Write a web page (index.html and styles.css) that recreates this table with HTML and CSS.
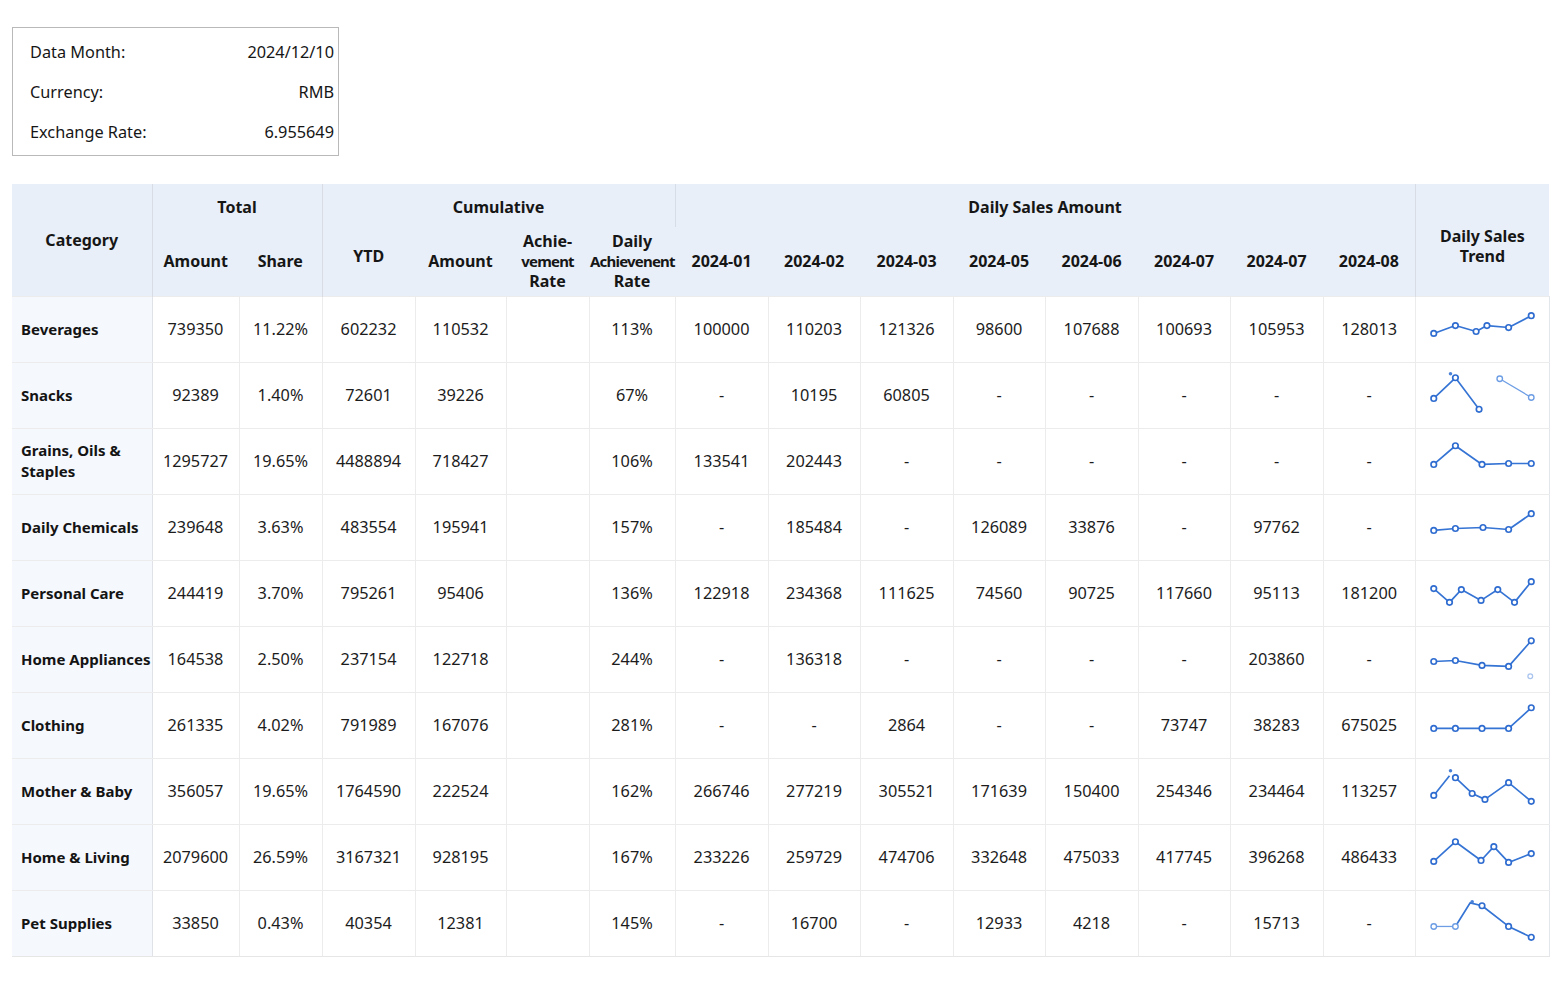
FILE: index.html
```html
<!DOCTYPE html>
<html lang="en">
<head>
<meta charset="utf-8">
<title>Daily Sales Report</title>
<link rel="stylesheet" href="styles.css">
</head>
<body>
<div class="page">
  <div class="info">
    <div class="info-row"><span>Data Month:</span><span>2024/12/10</span></div>
    <div class="info-row"><span>Currency:</span><span>RMB</span></div>
    <div class="info-row"><span>Exchange Rate:</span><span>6.955649</span></div>
  </div>

  <table class="report">
    <colgroup>
      <col class="c-cat"><col class="c-87"><col class="c-83"><col class="c-93"><col class="c-91"><col class="c-83"><col class="c-86">
      <col class="c-93"><col class="c-92"><col class="c-93"><col class="c-92"><col class="c-93"><col class="c-92"><col class="c-93"><col class="c-92">
      <col class="c-trend">
    </colgroup>
    <thead>
      <tr class="h1">
        <th rowspan="2" class="grp-end cat-h">Category</th>
        <th colspan="2" class="grp-end">Total</th>
        <th colspan="4" class="grp-mid">Cumulative</th>
        <th colspan="8" class="grp-end">Daily Sales Amount</th>
        <th rowspan="2" class="trend-h">Daily Sales<br>Trend</th>
      </tr>
      <tr class="h2">
        <th>Amount</th>
        <th class="grp-end">Share</th>
        <th class="ytd">YTD</th>
        <th>Amount</th>
        <th>Achie-<br><span class="squeeze">vement</span><br>Rate</th>
        <th class="wide">Daily<br><span class="squeeze">Achievenent</span><br>Rate</th>
        <th>2024-01</th>
        <th>2024-02</th>
        <th>2024-03</th>
        <th>2024-05</th>
        <th>2024-06</th>
        <th>2024-07</th>
        <th>2024-07</th>
        <th class="grp-end">2024-08</th>
      </tr>
    </thead>
    <tbody>
      <tr>
        <td class="cat">Beverages</td><td>739350</td><td>11.22%</td><td>602232</td><td>110532</td><td></td><td>113%</td>
        <td>100000</td><td>110203</td><td>121326</td><td>98600</td><td>107688</td><td>100693</td><td>105953</td><td>128013</td>
        <td class="spark"><svg viewBox="0 0 134 66" width="134" height="65"><polyline points="17,37 39,29 60,35 71,29 93,31 116,19"/><circle cx="17" cy="37" r="2.8"/><circle cx="39" cy="29" r="2.8"/><circle cx="60" cy="35" r="2.8"/><circle cx="71" cy="29" r="2.8"/><circle cx="93" cy="31" r="2.8"/><circle cx="116" cy="19" r="2.8"/></svg></td>
      </tr>
      <tr>
        <td class="cat">Snacks</td><td>92389</td><td>1.40%</td><td>72601</td><td>39226</td><td></td><td>67%</td>
        <td>-</td><td>10195</td><td>60805</td><td>-</td><td>-</td><td>-</td><td>-</td><td>-</td>
        <td class="spark"><svg viewBox="0 0 134 66" width="134" height="65"><polyline points="17,36 39,15 63,47"/><polyline class="light" points="84,16 116,35"/><circle class="dot" cx="34" cy="11" r="1.8"/><circle cx="17" cy="36" r="2.8"/><circle cx="39" cy="15" r="2.8"/><circle cx="63" cy="47" r="2.8"/><circle class="light" cx="84" cy="16" r="2.8"/><circle class="light" cx="116" cy="35" r="2.8"/></svg></td>
      </tr>
      <tr>
        <td class="cat">Grains, Oils &amp;<br>Staples</td><td>1295727</td><td>19.65%</td><td>4488894</td><td>718427</td><td></td><td>106%</td>
        <td>133541</td><td>202443</td><td>-</td><td>-</td><td>-</td><td>-</td><td>-</td><td>-</td>
        <td class="spark"><svg viewBox="0 0 134 66" width="134" height="65"><polyline points="17,36 39,17 66,36 93,35 116,35"/><circle cx="17" cy="36" r="2.8"/><circle cx="39" cy="17" r="2.8"/><circle cx="66" cy="36" r="2.8"/><circle cx="93" cy="35" r="2.8"/><circle cx="116" cy="35" r="2.8"/></svg></td>
      </tr>
      <tr>
        <td class="cat">Daily Chemicals</td><td>239648</td><td>3.63%</td><td>483554</td><td>195941</td><td></td><td>157%</td>
        <td>-</td><td>185484</td><td>-</td><td>126089</td><td>33876</td><td>-</td><td>97762</td><td>-</td>
        <td class="spark"><svg viewBox="0 0 134 66" width="134" height="65"><polyline points="17,36 39,34 67,33 93,35 116,19"/><circle cx="17" cy="36" r="2.8"/><circle cx="39" cy="34" r="2.8"/><circle cx="67" cy="33" r="2.8"/><circle cx="93" cy="35" r="2.8"/><circle cx="116" cy="19" r="2.8"/></svg></td>
      </tr>
      <tr>
        <td class="cat">Personal Care</td><td>244419</td><td>3.70%</td><td>795261</td><td>95406</td><td></td><td>136%</td>
        <td>122918</td><td>234368</td><td>111625</td><td>74560</td><td>90725</td><td>117660</td><td>95113</td><td>181200</td>
        <td class="spark"><svg viewBox="0 0 134 66" width="134" height="65"><polyline points="17,28 33,42 45,29 65,40 82,29 99,42 116,21"/><circle cx="17" cy="28" r="2.8"/><circle cx="33" cy="42" r="2.8"/><circle cx="45" cy="29" r="2.8"/><circle cx="65" cy="40" r="2.8"/><circle cx="82" cy="29" r="2.8"/><circle cx="99" cy="42" r="2.8"/><circle cx="116" cy="21" r="2.8"/></svg></td>
      </tr>
      <tr>
        <td class="cat">Home Appliances</td><td>164538</td><td>2.50%</td><td>237154</td><td>122718</td><td></td><td>244%</td>
        <td>-</td><td>136318</td><td>-</td><td>-</td><td>-</td><td>-</td><td>203860</td><td>-</td>
        <td class="spark"><svg viewBox="0 0 134 66" width="134" height="65"><polyline points="17,35 39,34 66,39 93,40 116,14"/><circle cx="17" cy="35" r="2.8"/><circle cx="39" cy="34" r="2.8"/><circle cx="66" cy="39" r="2.8"/><circle cx="93" cy="40" r="2.8"/><circle cx="116" cy="14" r="2.8"/><circle class="faint" cx="115" cy="50" r="2.4"/></svg></td>
      </tr>
      <tr>
        <td class="cat">Clothing</td><td>261335</td><td>4.02%</td><td>791989</td><td>167076</td><td></td><td>281%</td>
        <td>-</td><td>-</td><td>2864</td><td>-</td><td>-</td><td>73747</td><td>38283</td><td>675025</td>
        <td class="spark"><svg viewBox="0 0 134 66" width="134" height="65"><polyline points="17,36 39,36 66,36 93,36 116,15"/><circle cx="17" cy="36" r="2.8"/><circle cx="39" cy="36" r="2.8"/><circle cx="66" cy="36" r="2.8"/><circle cx="93" cy="36" r="2.8"/><circle cx="116" cy="15" r="2.8"/></svg></td>
      </tr>
      <tr>
        <td class="cat">Mother &amp; Baby</td><td>356057</td><td>19.65%</td><td>1764590</td><td>222524</td><td></td><td>162%</td>
        <td>266746</td><td>277219</td><td>305521</td><td>171639</td><td>150400</td><td>254346</td><td>234464</td><td>113257</td>
        <td class="spark"><svg viewBox="0 0 134 66" width="134" height="65"><polyline points="17,37 33,17"/><polyline points="39,19 56,35 69,41 93,24 116,43"/><circle class="dot" cx="34" cy="12" r="1.8"/><circle cx="17" cy="37" r="2.8"/><circle cx="39" cy="19" r="2.8"/><circle cx="56" cy="35" r="2.8"/><circle cx="69" cy="41" r="2.8"/><circle cx="93" cy="24" r="2.8"/><circle cx="116" cy="43" r="2.8"/></svg></td>
      </tr>
      <tr>
        <td class="cat">Home &amp; Living</td><td>2079600</td><td>26.59%</td><td>3167321</td><td>928195</td><td></td><td>167%</td>
        <td>233226</td><td>259729</td><td>474706</td><td>332648</td><td>475033</td><td>417745</td><td>396268</td><td>486433</td>
        <td class="spark"><svg viewBox="0 0 134 66" width="134" height="65"><polyline points="17,37 39,17 65,36 78,22 93,38 116,29"/><circle cx="17" cy="37" r="2.8"/><circle cx="39" cy="17" r="2.8"/><circle cx="65" cy="36" r="2.8"/><circle cx="78" cy="22" r="2.8"/><circle cx="93" cy="38" r="2.8"/><circle cx="116" cy="29" r="2.8"/></svg></td>
      </tr>
      <tr>
        <td class="cat">Pet Supplies</td><td>33850</td><td>0.43%</td><td>40354</td><td>12381</td><td></td><td>145%</td>
        <td>-</td><td>16700</td><td>-</td><td>12933</td><td>4218</td><td>-</td><td>15713</td><td>-</td>
        <td class="spark"><svg viewBox="0 0 134 66" width="134" height="65"><polyline class="light" points="17,36 39,36"/><polyline points="39,36 54,12 66,15 93,36 116,47"/><circle class="dot" cx="56" cy="11" r="1.8"/><circle class="light" cx="17" cy="36" r="2.8"/><circle class="light" cx="39" cy="36" r="2.8"/><circle cx="66" cy="15" r="2.8"/><circle cx="93" cy="36" r="2.8"/><circle cx="116" cy="47" r="2.8"/></svg></td>
      </tr>
    </tbody>
  </table>
</div>
</body>
</html>
```
FILE: styles.css
```css
* { box-sizing: border-box; }

html, body {
  margin: 0;
  padding: 0;
  background: #ffffff;
}

body {
  font-family: "Noto Sans", "Open Sans", "Liberation Sans", sans-serif;
  color: #1c1c1c;
  font-size: 16px;
}

.page {
  padding: 27px 11px 0 12px;
}

/* info box */
.info {
  width: 327px;
  border: 1px solid #b9b9b9;
  padding: 4px 4px 3px 17px;
}

.info-row {
  display: flex;
  justify-content: space-between;
  align-items: center;
  height: 40px;
  font-size: 16.3px;
  color: #161616;
}

/* table */
.report {
  margin-top: 28px;
  width: 1537px;
  table-layout: fixed;
  border-collapse: collapse;
}

.c-cat { width: 140px; }
.c-87 { width: 87px; }
.c-83 { width: 83px; }
.c-93 { width: 93px; }
.c-92 { width: 92px; }
.c-91 { width: 91px; }
.c-86 { width: 86px; }
.c-trend { width: 134px; }

.report th {
  background: #e9eff9;
  font-weight: 700;
  font-size: 16px;
  line-height: 20px;
  color: #161616;
  text-align: center;
  vertical-align: middle;
  padding: 0 1px;
  border: none;
}

.report .h1 th { height: 43px; padding-top: 2px; }
.report .h2 th { height: 69px; padding-top: 0; }

.report th.cat-h { padding-top: 0; }
.report th.trend-h { padding-top: 12px; }

.report th.grp-end { border-right: 1px solid #d8dde5; }
.report th.grp-mid { border-right: 1px solid #d8dde5; }
.report .h2 th.ytd { padding-bottom: 10px; }

.report th.wide { white-space: nowrap; overflow: visible; }

.squeeze {
  display: inline-block;
  font-size: 15px;
  letter-spacing: -0.8px;
}

.report td {
  height: 65px;
  padding: 0 2px;
  text-align: center;
  vertical-align: middle;
  font-size: 16.3px;
  line-height: 21px;
  color: #1c1c1c;
  border: 1px solid #ececec;
  background: #ffffff;
}

.report tbody tr td:first-child { border-left: none; }

.report td.cat {
  background: #f5f8fd;
  text-align: left;
  font-weight: 700;
  font-size: 15px;
  white-space: nowrap;
  padding: 0 0 0 9px;
  color: #141414;
  border-right: 1px solid #dfe3e8;
}

.report td.spark {
  padding: 0;
  border-left: 1px solid #dfe3e8;
  border-right: 1px solid #e3e6ea;
}

.report tbody tr:last-child td { border-bottom: 1px solid #e6e6e6; }

.spark svg { display: block; }

.spark polyline {
  fill: none;
  stroke: #3574d4;
  stroke-width: 1.7;
  stroke-linejoin: round;
}

.spark polyline.light { stroke: #6d9de4; stroke-width: 1.3; }

.spark circle {
  fill: #ffffff;
  stroke: #2f6cd0;
  stroke-width: 1.7;
}

.spark circle.light { stroke: #6d9de4; stroke-width: 1.4; }
.spark circle.faint { stroke: #a9c4ee; stroke-width: 1.3; }
.spark circle.dot { fill: #4a82d8; stroke: none; }
```
